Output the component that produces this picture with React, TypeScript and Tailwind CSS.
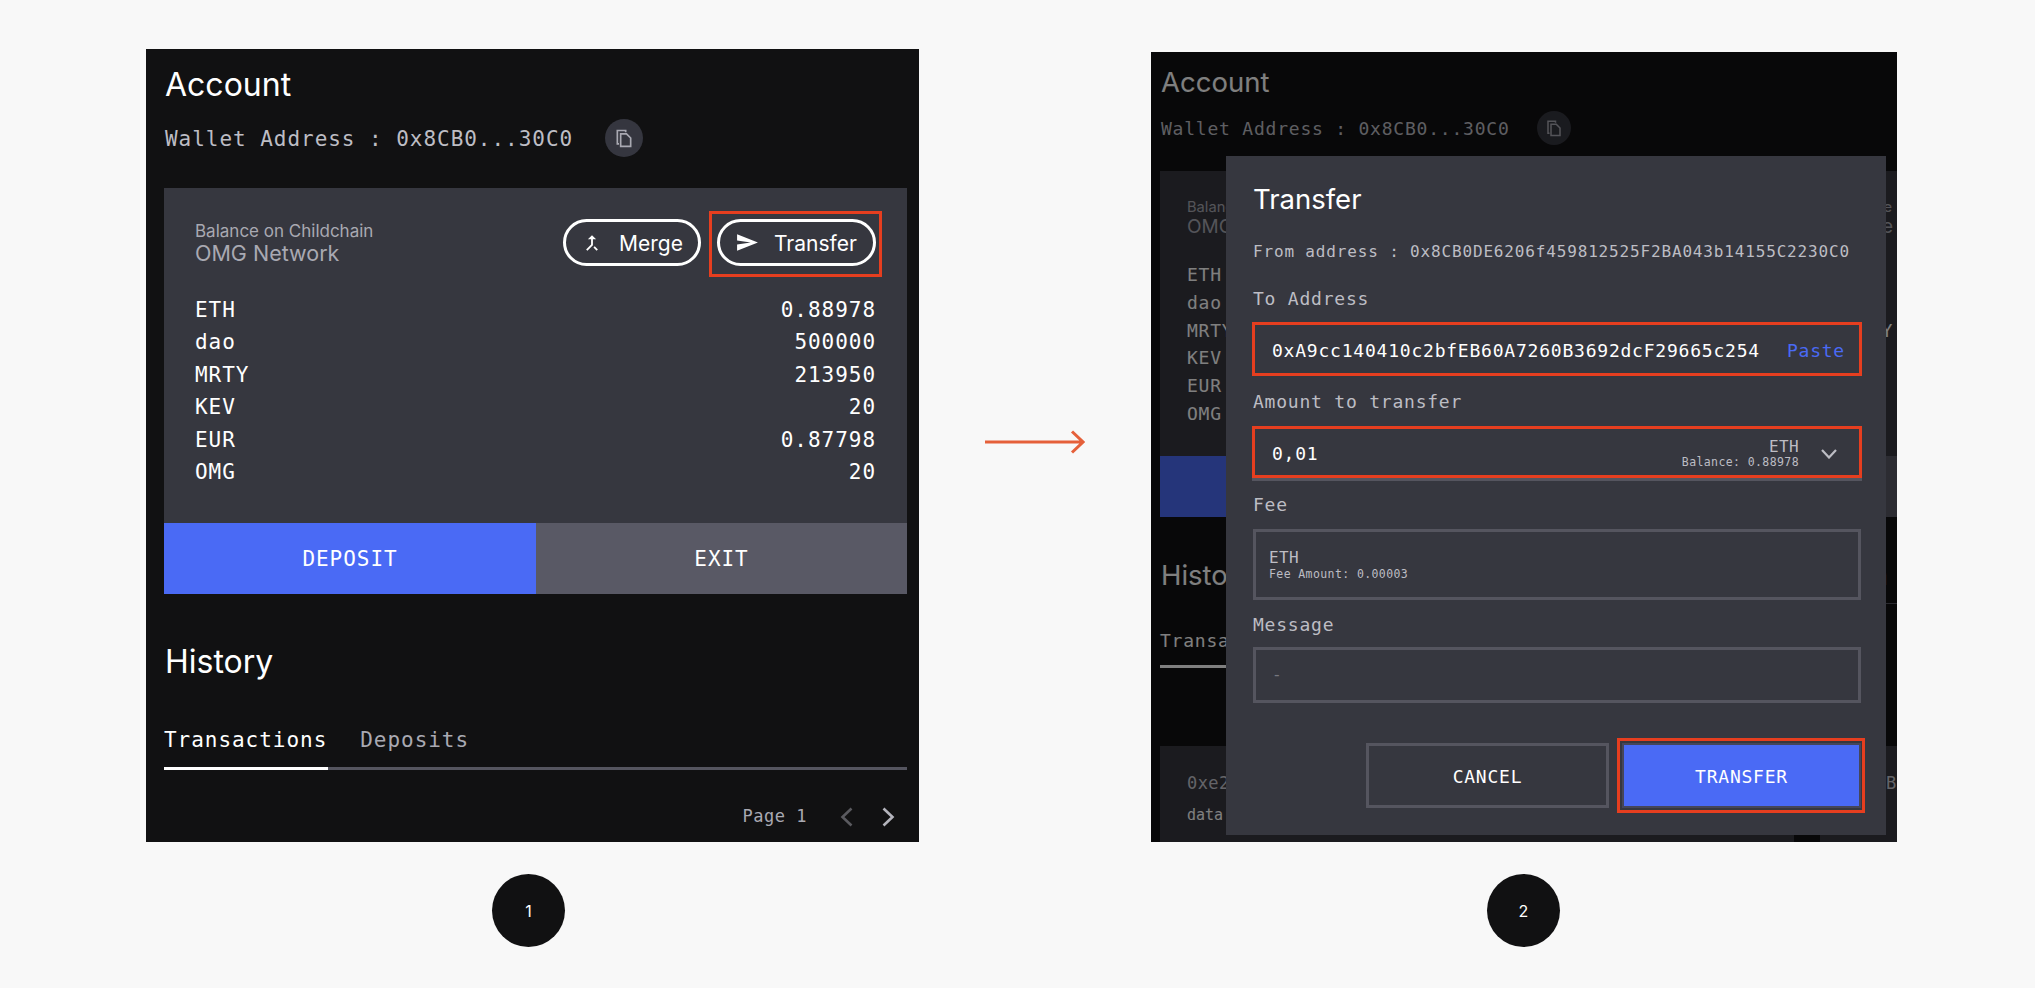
import React from "react";

const sans = "[font-family:Inter,sans-serif]";
const mono = "[font-family:'DejaVu_Sans_Mono',monospace]";
const mono20 = `${mono} text-[21px] tracking-[0.96px]`;
const mono17 = `${mono} text-[18px] tracking-[0.78px]`;

const balances = [
  ["ETH", "0.88978"],
  ["dao", "500000"],
  ["MRTY", "213950"],
  ["KEV", "20"],
  ["EUR", "0.87798"],
  ["OMG", "20"],
];

function CopyIcon({ size }: { size: number }) {
  return (
    <svg width={size} height={size} viewBox="0 0 24 24" fill="none" stroke="#a9a9b2" strokeWidth="2">
      <path d="M6 19H4V3h10v2" />
      <path d="M8 7h7l5 5v10H8z" />
    </svg>
  );
}

function Badge({ n }: { n: number }) {
  return (
    <div className={`w-[73px] h-[73px] rounded-full bg-[#111112] text-white flex items-center justify-center text-[16px] ${sans}`}>
      {n}
    </div>
  );
}

function Field({ label, className, children }: { label: string; className: string; children?: React.ReactNode }) {
  return (
    <>
      <div className={`h-[20px] leading-[20px] text-[#bdbdc4] ${mono17} ${className}`}>{label}</div>
      {children}
    </>
  );
}

function TransferModal() {
  return (
    <div className="absolute left-[75px] top-[104px] w-[660px] h-[679px] bg-[#36373f] pl-[27px] pr-[25px] pt-[26px]">
      <h2 className={`h-[34px] leading-[34px] text-[27.5px] text-white ${sans}`}>Transfer</h2>
      <div className={`mt-[26px] h-[20px] leading-[20px] whitespace-nowrap text-[#bdbdc4] ${mono} text-[16px] tracking-[0.84px]`}>
        From address : 0x8CB0DE6206f459812525F2BA043b14155C2230C0
      </div>

      <Field label="To Address" className="mt-[27px]">
        <div className="mt-[13px] -mx-px h-[54px] border-[3px] border-[#e63e1f] flex items-center justify-between pl-[17px] pr-[14px] pt-[3px]">
          <span className={`text-white ${mono17}`}>0xA9cc140410c2bfEB60A7260B3692dcF29665c254</span>
          <span className={`text-[#4a6af5] ${mono17}`}>Paste</span>
        </div>
      </Field>

      <Field label="Amount to transfer" className="mt-[16px]">
        <div className="mt-[14px] -mx-px h-[52px] border-[3px] border-[#e63e1f] shadow-[0_3px_0_#55555f] flex items-center pl-[17px] pr-[22px] pt-[3px]">
          <span className={`text-white ${mono17}`}>0,01</span>
          <div className="ml-auto text-right">
            <div className={`h-[16px] leading-[16px] text-[#bdbdc4] ${mono} text-[16px] tracking-[0.4px]`}>ETH</div>
            <div className={`h-[14px] leading-[14px] text-[#bdbdc4] ${mono} text-[11.5px] tracking-[0.4px]`}>Balance: 0.88978</div>
          </div>
          <svg className="ml-[22px]" width="16" height="10" viewBox="0 0 16 10" fill="none" stroke="#bdbdc4" strokeWidth="2.2">
            <path d="M1 1l7 7.5L15 1" />
          </svg>
        </div>
      </Field>

      <Field label="Fee" className="mt-[17px]">
        <div className="mt-[14px] h-[71px] border-[3px] border-[#55555f] pl-[13px] flex flex-col justify-center">
          <div className={`h-[18px] leading-[18px] text-[#bdbdc4] ${mono} text-[16px] tracking-[0.4px]`}>ETH</div>
          <div className={`h-[14px] leading-[14px] text-[#bdbdc4] ${mono} text-[11.5px] tracking-[0.4px]`}>Fee Amount: 0.00003</div>
        </div>
      </Field>

      <Field label="Message" className="mt-[15px]">
        <div className={`mt-[12px] h-[56px] border-[3px] border-[#55555f] pl-[16px] flex items-center text-[#77777f] ${mono} text-[16px]`}>-</div>
      </Field>

      <div className="mt-[40px] flex justify-end gap-[13px]">
        <button className={`w-[243px] h-[65px] border-[3px] border-[#55555f] text-white pt-[1px] ${mono17}`}>CANCEL</button>
        <button className={`relative w-[239px] h-[65px] bg-[#4a6af5] border-2 border-[#45465a] text-white pt-[1px] ${mono17}`}>
          TRANSFER
          <span className="absolute -left-[7px] -top-[7px] -right-[6px] -bottom-[7px] border-[3px] border-[#e63e1f]" />
        </button>
      </div>
    </div>
  );
}

export default function App() {
  return (
    <main className="w-[2035px] h-[988px] bg-[#f8f8f8] overflow-hidden">
      <div className="flex items-end pl-[146px] pt-[49px]">
        {/* Pantalla 1 */}
        <section className="w-[773px] h-[793px] bg-[#111112] px-[18px] pt-[16px] overflow-hidden">
          <h1 className={`h-[38px] leading-[40px] text-[32px] text-white pl-px ${sans}`}>Account</h1>
          <div className="mt-[16px] h-[38px] pl-px flex items-center">
            <span className={`pt-[4px] text-[#bdbdc4] ${mono20}`}>Wallet Address : 0x8CB0...30C0</span>
            <div className="ml-[32px] w-[38px] h-[38px] rounded-full bg-[#35363f] flex items-center justify-center">
              <CopyIcon size={20} />
            </div>
          </div>

          <div className="mt-[31px] w-[743px] bg-[#36373f]">
            <div className="px-[31px] pt-[31px]">
              <div className="flex justify-between h-[46px]">
                <div className={`pt-[2px] ${sans}`}>
                  <div className="h-[20px] leading-[20px] text-[17px] text-[#a9a9b2]">Balance on Childchain</div>
                  <div className="h-[24px] leading-[24px] text-[21.5px] text-[#a9a9b2]">OMG Network</div>
                </div>
                <div className={`flex gap-[16px] text-[21px] text-white ${sans}`}>
                  <button className="w-[138px] h-[47px] rounded-full border-[3px] border-white flex items-center pl-[15px] gap-[16px] pt-[2px]">
                    <svg className="-mt-[2px]" width="22" height="22" viewBox="0 0 24 24" fill="white">
                      <path d="M17 20.41L18.41 19 15 15.59 13.59 17 17 20.41zM7.5 8H11v5.59L5.59 19 7 20.41l6-6V8h3.5L12 3.5 7.5 8z" />
                    </svg>
                    Merge
                  </button>
                  <button className="relative w-[159px] h-[47px] rounded-full border-[3px] border-white flex items-center pl-[15px] gap-[14px] pt-[2px]">
                    <svg className="-mt-[2px]" width="25" height="25" viewBox="0 0 24 24" fill="white">
                      <path d="M2 20l20-8L2 4v6l13 2-13 2z" />
                    </svg>
                    Transfer
                    <span className="absolute -left-[11px] -top-[11px] -right-[9px] -bottom-[14px] border-[3px] border-[#e63e1f]" />
                  </button>
                </div>
              </div>

              <div className="mt-[29px]">
                {balances.map(([name, value]) => (
                  <div key={name} className={`h-[32.5px] flex items-center justify-between text-white ${mono20}`}>
                    <span>{name}</span>
                    <span>{value}</span>
                  </div>
                ))}
              </div>
            </div>

            <div className={`mt-[34px] flex text-white ${mono20}`}>
              <button className="w-[372px] h-[71px] bg-[#4a6af5] pt-[2px]">DEPOSIT</button>
              <button className="w-[371px] h-[71px] bg-[#595965] pt-[2px]">EXIT</button>
            </div>
          </div>

          <h2 className={`mt-[49px] h-[38px] leading-[38px] text-[32px] text-white pl-px ${sans}`}>History</h2>
          <div className={`mt-[45px] h-[28px] leading-[28px] flex gap-[33px] ${mono20}`}>
            <span className="text-white">Transactions</span>
            <span className="text-[#a9a9b2]">Deposits</span>
          </div>
          <div className="mt-[13px] w-[743px] h-[3px] bg-[#55555f]">
            <div className="w-[164px] h-[3px] bg-white" />
          </div>
          <div className="mt-[35px] h-[24px] flex items-center justify-end pr-[6px]">
            <span className={`text-[#a9a9b2] ${mono} text-[17px] tracking-[0.5px]`}>Page 1</span>
            <svg className="ml-[33px]" width="13" height="20" viewBox="0 0 13 20" fill="none" stroke="#5a5a5f" strokeWidth="2.6">
              <path d="M11.5 1.5L2.5 10l9 8.5" />
            </svg>
            <svg className="ml-[29px]" width="13" height="20" viewBox="0 0 13 20" fill="none" stroke="#b4b4bc" strokeWidth="2.6">
              <path d="M1.5 1.5l9 8.5-9 8.5" />
            </svg>
          </div>
        </section>

        {/* Flecha */}
        <div className="w-[232px] self-center flex justify-center mb-[8px]">
          <svg width="100" height="24" viewBox="0 0 100 24" fill="none" stroke="#e5603a" strokeWidth="3">
            <path d="M0 12h98M87 1.5L98 12 87 22.5" />
          </svg>
        </div>

        {/* Pantalla 2 */}
        <section className="relative w-[746px] h-[790px] bg-[#111112] overflow-hidden px-[9px] pt-[13px]">
          <h1 className={`h-[34px] leading-[34px] text-[27.5px] text-white pl-px ${sans}`}>Account</h1>
          <div className="mt-[12px] h-[34px] pl-px flex items-center">
            <span className={`pt-[1px] text-[#bdbdc4] ${mono17}`}>Wallet Address : 0x8CB0...30C0</span>
            <div className="ml-[27px] w-[34px] h-[34px] rounded-full bg-[#35363f] flex items-center justify-center">
              <CopyIcon size={18} />
            </div>
          </div>

          <div className="mt-[26px] w-[760px] h-[285px] bg-[#36373f]">
            <div className="px-[27px] pt-[27px]">
              <div className={`flex ${sans} text-[#a9a9b2]`}>
                <div className="w-[699px]">
                  <div className="h-[18px] leading-[18px] text-[14.7px]">Balance on Childchain</div>
                  <div className="h-[22px] leading-[22px] text-[19px]">OMG Network</div>
                </div>
                <div>
                  <div className="h-[18px] leading-[18px] text-[14.7px]">ce</div>
                  <div className="h-[22px] leading-[22px] text-[19px]">re</div>
                </div>
              </div>
              <div className="mt-[23px]">
                {balances.map(([name]) => (
                  <div key={name} className={`h-[27.7px] flex items-center text-white ${mono17}`}>
                    <span className="w-[699px]">{name}</span>
                    {name === "MRTY" && <span>Y</span>}
                  </div>
                ))}
              </div>
            </div>
          </div>
          <div className="w-[760px] h-[61px] flex bg-[#595965]">
            <div className="w-[380px] bg-[#4a6af5]" />
          </div>

          <h2 className={`mt-[41px] h-[34px] leading-[34px] text-[27.5px] text-white pl-px whitespace-nowrap ${sans} flex`}>
            <span className="w-[724px]">History</span>
            <span className="text-[#a9a9b2]">ea</span>
          </h2>
          <div className={`mt-[37px] h-[24px] leading-[24px] text-white ${mono17}`}>Transactions</div>
          <div className="mt-[12px] w-[140px] h-[3px] bg-white" />

          <div className="relative mt-[78px] w-[760px] h-[100px] bg-[#36373f] pl-[27px] pt-[26px]">
            <div className={`h-[22px] leading-[22px] flex text-[#c8c8d0] ${mono} text-[17px] tracking-[0.4px]`}>
              <span className="w-[699px]">0xe2</span>
              <span>Ba</span>
            </div>
            <div className={`mt-[11px] h-[20px] leading-[20px] text-white ${mono} text-[15px]`}>data</div>
            <div className="absolute left-[634px] top-[88px] w-[26px] h-[12px] bg-[#111112]" />
          </div>

          <div className="absolute inset-0 bg-black/50" />
          <div className="absolute right-0 top-[551px] w-[11px] h-px bg-[#2a2a30]" />
          <TransferModal />
        </section>
      </div>

      <div className="flex pt-[32px]">
        <div className="ml-[492px]"><Badge n={1} /></div>
        <div className="ml-[922px]"><Badge n={2} /></div>
      </div>
    </main>
  );
}
